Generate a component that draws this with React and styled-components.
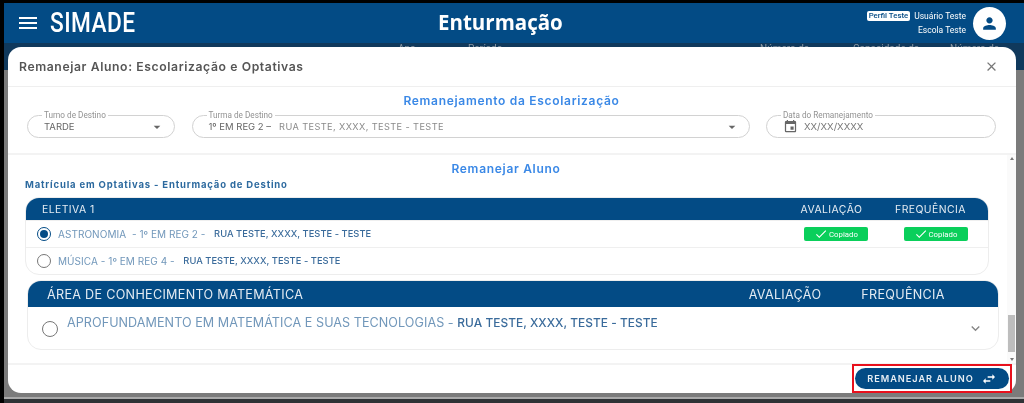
import React from 'react';
import styled, { createGlobalStyle } from 'styled-components';
import {
  MdMenu, MdClose, MdArrowDropDown, MdPerson, MdEvent, MdCheck, MdSwapHoriz, MdKeyboardArrowDown,
} from 'react-icons/md';

const NAVY = '#034b85';
const BLUE = '#3a88e6';

const GlobalStyle = createGlobalStyle`
  html, body { margin: 0; padding: 0; background: #000; }
  * { box-sizing: border-box; }
  body { font-family: Inter, "Open Sans", sans-serif; }
`;

const Frame = styled.div`
  position: relative;
  width: 1024px;
  height: 403px;
  padding: 3px 0 0 4px;
  background: #000;
  display: flex;
  flex-direction: column;
  overflow: hidden;
  filter: blur(0.6px);
`;

const TopBar = styled.header`
  height: 40px;
  flex: none;
  background: ${NAVY};
  color: #fff;
  display: grid;
  grid-template-columns: 434px auto 1fr;
  align-items: center;
`;

const Brand = styled.div`
  display: flex;
  align-items: center;
  gap: 10px;
  padding-left: 12px;
  font-size: 20px;
`;

const Logo = styled.span`
  font-family: Roboto, sans-serif;
  font-weight: 500;
  font-size: 27px;
  letter-spacing: 0.5px;
  transform: scaleX(0.84);
  transform-origin: left center;
`;

const PageTitle = styled.h1`
  margin: 0 0 2px;
  font-family: "Open Sans", sans-serif;
  font-weight: 700;
  font-size: 20.5px;
`;

const UserArea = styled.div`
  display: flex;
  justify-content: flex-end;
  align-items: center;
  gap: 7px;
  padding-right: 18px;
`;

const UserText = styled.div`
  display: flex;
  flex-direction: column;
  align-items: flex-end;
  gap: 4px;
  font-family: Roboto, sans-serif;
  font-size: 8.5px;
  line-height: 10px;
`;

const UserLine = styled.div`
  display: flex;
  align-items: center;
  gap: 4px;
`;

const ProfileBadge = styled.span`
  background: #fff;
  color: ${NAVY};
  border-radius: 2px;
  padding: 0 2px;
  font-size: 7.8px;
  font-weight: 500;
`;

const Avatar = styled.div`
  width: 33px;
  height: 33px;
  border-radius: 50%;
  background: #fff;
  color: ${NAVY};
  display: flex;
  align-items: center;
  justify-content: center;
  font-size: 19px;
`;

const TableHead = styled.div`
  height: 27px;
  flex: none;
  background: #10395c;
  display: grid;
  grid-template-columns: 70px 292px 93px 97px 1fr;
  padding-left: 394px;
  color: #8a97a3;
  font-family: Roboto, sans-serif;
  font-size: 10px;
  line-height: 11px;
`;

const Backdrop = styled.div`
  flex: 1;
  background: #7b7b7b;
`;

const BottomEdge = styled.div`
  height: 6px;
  flex: none;
  background: #2f3235;
  border-top: 2px solid #a9a9a9;
`;

const Modal = styled.section`
  position: absolute;
  left: 8px;
  top: 47px;
  width: 1008px;
  height: 346px;
  background: #fff;
  border-radius: 13px;
  display: flex;
  flex-direction: column;
  color: #4a4a4a;
`;

const ModalHeader = styled.div`
  height: 40px;
  flex: none;
  display: flex;
  align-items: center;
  justify-content: space-between;
  padding: 0 17px 1px 11px;
  border-bottom: 1px solid #efefef;
`;

const ModalTitle = styled.h2`
  margin: 0;
  font-size: 12.2px;
  font-weight: 600;
  letter-spacing: 0.6px;
  color: #555;
`;

const CloseIcon = styled(MdClose)`
  font-size: 15px;
  color: #777;
`;

const Transfer = styled.div`
  height: 68px;
  flex: none;
  padding: 6px 20px 0 19px;
  border-bottom: 2px solid #f3f3f3;
`;

const SectionTitle = styled.h3`
  margin: 0;
  text-align: center;
  color: ${BLUE};
  font-size: 12px;
  font-weight: 600;
  letter-spacing: 0.7px;
  line-height: 15px;
`;

const Fields = styled.div`
  display: flex;
  gap: 16.5px;
  margin-top: 7px;
`;

const Field = styled.div`
  position: relative;
  width: ${(p) => p.$width}px;
  height: 23px;
  border: 1px solid #d2d2d2;
  border-radius: 12px;
  display: flex;
  align-items: center;
  padding: 0 9px 0 16px;
  font-size: 9.5px;
  color: #666;
`;

const FieldLabel = styled.label`
  position: absolute;
  left: 14px;
  top: -5px;
  padding: 0 2px;
  background: #fff;
  color: #929292;
  font-family: Roboto, sans-serif;
  font-size: 8.2px;
  line-height: 9px;
`;

const FieldValue = styled.span`
  flex: 1;
  white-space: nowrap;
`;

const FieldHint = styled.span`
  margin-left: 8px;
  font-size: 9.2px;
  letter-spacing: 0.4px;
  color: #8a8a8a;
`;

const CalendarIcon = styled(MdEvent)`
  font-size: 15px;
  color: #666;
  margin-right: 6px;
`;

const DateValue = styled.span`
  font-size: 9.6px;
  color: #777;
`;

const DropIcon = styled(MdArrowDropDown)`
  font-size: 16px;
  color: #666;
`;

const ScrollArea = styled.div`
  flex: 1;
  display: flex;
  min-height: 0;
`;

const ScrollContent = styled.div`
  flex: 1;
  padding: 6px 0 0 17px;
`;

const CenterTitle = styled(SectionTitle)`
  margin-right: 20px;
`;

const Enrollment = styled.h4`
  margin: 2px 0 5px;
  color: #2d6a9f;
  font-size: 9.5px;
  font-weight: 700;
  letter-spacing: 0.83px;
  line-height: 14px;
`;

const Card = styled.div`
  width: ${(p) => p.$width}px;
  margin: ${(p) => p.$margin};
  border: 1px solid #ededed;
  border-radius: 14px;
  background: #fff;
  overflow: hidden;
`;

const CardHead = styled.div`
  height: ${(p) => p.$height}px;
  background: ${NAVY};
  color: #e4ebf2;
  display: grid;
  grid-template-columns: 1fr ${(p) => p.$col}px ${(p) => p.$col}px;
  align-items: center;
  padding: 0 ${(p) => p.$right}px 0 ${(p) => p.$left}px;
  font-size: ${(p) => p.$size}px;
  letter-spacing: ${(p) => p.$spacing}px;
`;

const HeadCell = styled.span`
  text-align: center;
`;

const Row = styled.div`
  height: 27px;
  display: grid;
  grid-template-columns: 1fr 100px 99px;
  align-items: center;
  padding: 0 3px 0 11px;
  border-top: 1px solid #efefef;
  &:first-of-type { border-top: 0; }
`;

const RowLabel = styled.div`
  display: flex;
  align-items: center;
  gap: 7px;
  white-space: pre;
`;

const RowText = styled.span`
  display: inline-flex;
  align-items: center;
  height: 14px;
`;

const Radio = styled.span`
  width: 14px;
  height: 14px;
  flex: none;
  border-radius: 50%;
  border: 1.5px solid ${(p) => (p.$checked ? NAVY : '#777')};
  display: flex;
  align-items: center;
  justify-content: center;
  &::after {
    content: '';
    width: 8px;
    height: 8px;
    border-radius: 50%;
    background: ${(p) => (p.$checked ? NAVY : 'transparent')};
  }
`;

const Subject = styled.span`
  color: #7197ba;
  font-size: ${(p) => p.$size}px;
  letter-spacing: 0.05px;
  line-height: 1;
`;

const Address = styled.span`
  color: #3a6b9b;
  font-size: ${(p) => p.$size}px;
  font-weight: 500;
  letter-spacing: 0.05px;
  line-height: 1;
`;

const Copied = styled.span`
  justify-self: center;
  width: 64px;
  height: 14px;
  background: #0acf5b;
  border-radius: 2px;
  color: #fff;
  display: flex;
  align-items: center;
  justify-content: center;
  gap: 1px;
  font-family: Roboto, sans-serif;
  font-size: 7.8px;
`;

const AreaRow = styled.div`
  height: 42px;
  display: flex;
  align-items: flex-start;
  justify-content: space-between;
  padding: 8px 14px 0 14px;
`;

const AreaLabel = styled.div`
  display: flex;
  gap: 9px;
  white-space: pre;
`;

const AreaRadio = styled(Radio)`
  margin-top: 6px;
  width: 16px;
  height: 16px;
`;

const AreaText = styled.div`
  display: flex;
  align-items: center;
  height: 16px;
`;

const ExpandIcon = styled(MdKeyboardArrowDown)`
  margin-top: 5px;
  font-size: 17px;
  color: #888;
`;

const Scrollbar = styled.div`
  width: 9px;
  flex: none;
  background: #fafafa;
  display: flex;
  flex-direction: column;
  justify-content: space-between;
  align-items: center;
  padding: 2px 0;
`;

const ScrollArrow = styled.span`
  width: 0;
  height: 0;
  border-left: 2.5px solid transparent;
  border-right: 2.5px solid transparent;
  ${(p) => (p.$down ? 'border-top: 3px solid #777;' : 'border-bottom: 3px solid #777;')}
`;

const ScrollThumb = styled.span`
  width: 7px;
  height: 37px;
  background: #bdbdbd;
  margin-top: auto;
  margin-bottom: 6px;
`;

const ModalFooter = styled.div`
  height: 30px;
  flex: none;
  border-top: 2px solid #f3f3f3;
  display: flex;
  justify-content: flex-end;
  padding-right: 4px;
`;

const Highlight = styled.div`
  width: 160px;
  height: 29px;
  margin-top: -1px;
  border: 2px solid #e8101c;
  display: flex;
  align-items: center;
  justify-content: center;
`;

const ActionButton = styled.button`
  width: 154px;
  height: 21px;
  border: 0;
  border-radius: 11px;
  background: ${NAVY};
  color: #e8eef4;
  font-family: Inter, sans-serif;
  font-size: 9.2px;
  font-weight: 600;
  letter-spacing: 0.95px;
  display: flex;
  align-items: center;
  justify-content: center;
  gap: 7px;
  padding: 0;
`;

const SwapIcon = styled(MdSwapHoriz)`
  font-size: 16px;
  color: #fff;
`;

const App = () => (
  <>
    <GlobalStyle />
    <Frame>
      <TopBar>
        <Brand>
          <MdMenu size={24} />
          <Logo>SIMADE</Logo>
        </Brand>
        <PageTitle>Enturmação</PageTitle>
        <UserArea>
          <UserText>
            <UserLine>
              <ProfileBadge>Perfil Teste</ProfileBadge>
              <span>Usuário Teste</span>
            </UserLine>
            <span>Escola Teste</span>
          </UserText>
          <Avatar><MdPerson /></Avatar>
        </UserArea>
      </TopBar>
      <TableHead>
        <span>Ano</span>
        <span>Período</span>
        <span>Número da</span>
        <span>Capacidade da</span>
        <span>Número de</span>
      </TableHead>
      <Backdrop />
      <BottomEdge />

      <Modal>
        <ModalHeader>
          <ModalTitle>Remanejar Aluno: Escolarização e Optativas</ModalTitle>
          <CloseIcon />
        </ModalHeader>

        <Transfer>
          <SectionTitle>Remanejamento da Escolarização</SectionTitle>
          <Fields>
            <Field $width={148}>
              <FieldLabel>Turno de Destino</FieldLabel>
              <FieldValue>TARDE</FieldValue>
              <DropIcon />
            </Field>
            <Field $width={558}>
              <FieldLabel>Turma de Destino</FieldLabel>
              <FieldValue>1º EM REG 2 –<FieldHint>RUA TESTE, XXXX, TESTE - TESTE</FieldHint></FieldValue>
              <DropIcon />
            </Field>
            <Field $width={230}>
              <FieldLabel>Data do Remanejamento</FieldLabel>
              <CalendarIcon />
              <DateValue>XX/XX/XXXX</DateValue>
            </Field>
          </Fields>
        </Transfer>

        <ScrollArea>
          <ScrollContent>
            <CenterTitle>Remanejar Aluno</CenterTitle>
            <Enrollment>Matrícula em Optativas - Enturmação de Destino</Enrollment>

            <Card $width={964} $margin="0">
              <CardHead $height={22} $col={99} $left={16} $right={8} $size={10.4} $spacing={0.45}>
                <span>ELETIVA 1</span>
                <HeadCell>AVALIAÇÃO</HeadCell>
                <HeadCell>FREQUÊNCIA</HeadCell>
              </CardHead>
              <Row>
                <RowLabel>
                  <Radio $checked />
                  <RowText>
                    <Subject $size={10}>ASTRONOMIA  - 1º EM REG 2 -   </Subject>
                    <Address $size={9.3}>RUA TESTE, XXXX, TESTE - TESTE</Address>
                  </RowText>
                </RowLabel>
                <Copied><MdCheck size={14} />Copiado</Copied>
                <Copied><MdCheck size={14} />Copiado</Copied>
              </Row>
              <Row>
                <RowLabel>
                  <Radio />
                  <RowText>
                    <Subject $size={10}>MÚSICA - 1º EM REG 4 -   </Subject>
                    <Address $size={9.3}>RUA TESTE, XXXX, TESTE - TESTE</Address>
                  </RowText>
                </RowLabel>
              </Row>
            </Card>

            <Card $width={972} $margin="5px 0 0 2px">
              <CardHead $height={26} $col={118} $left={19} $right={36} $size={12.6} $spacing={0.3}>
                <span>ÁREA DE CONHECIMENTO MATEMÁTICA</span>
                <HeadCell>AVALIAÇÃO</HeadCell>
                <HeadCell>FREQUÊNCIA</HeadCell>
              </CardHead>
              <AreaRow>
                <AreaLabel>
                  <AreaRadio />
                  <AreaText>
                    <Subject $size={12.6}>APROFUNDAMENTO EM MATEMÁTICA E SUAS TECNOLOGIAS - </Subject>
                    <Address $size={11.9}>RUA TESTE, XXXX, TESTE - TESTE</Address>
                  </AreaText>
                </AreaLabel>
                <ExpandIcon />
              </AreaRow>
            </Card>
          </ScrollContent>
          <Scrollbar>
            <ScrollArrow />
            <ScrollThumb />
            <ScrollArrow $down />
          </Scrollbar>
        </ScrollArea>

        <ModalFooter>
          <Highlight>
            <ActionButton>
              REMANEJAR ALUNO
              <SwapIcon />
            </ActionButton>
          </Highlight>
        </ModalFooter>
      </Modal>
    </Frame>
  </>
);

export default App;
